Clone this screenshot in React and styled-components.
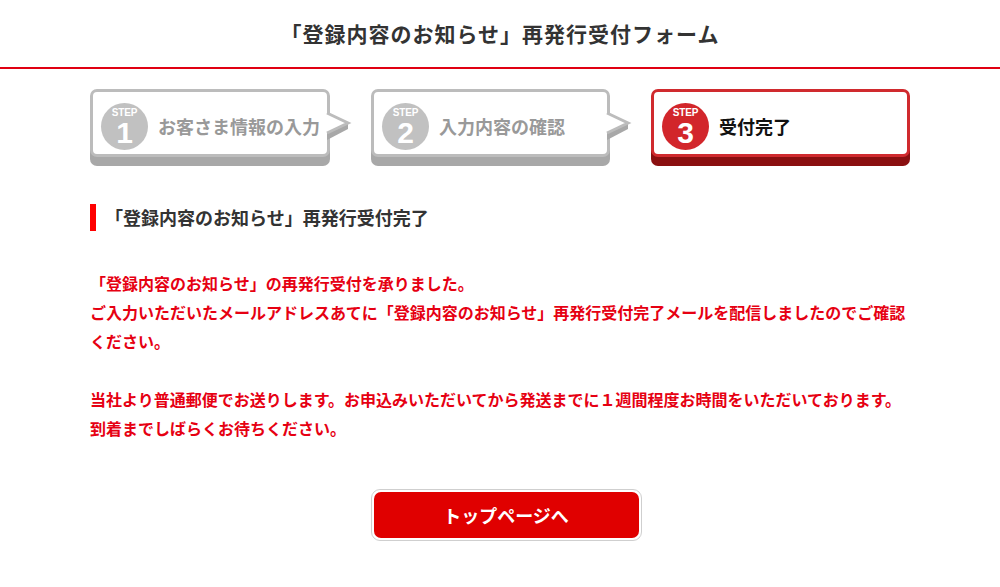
import React from 'react';
import styled, { createGlobalStyle } from 'styled-components';

const GlobalStyle = createGlobalStyle`
  body {
    margin: 0;
    background: #fff;
    font-family: "Noto Sans CJK JP", "Noto Sans", sans-serif;
  }
`;

const Header = styled.header`
  height: 67px;
  border-bottom: 2px solid #e00012;
  display: flex;
  align-items: center;
  justify-content: center;
`;

const Title = styled.h1`
  margin: 0;
  font-size: 21px;
  font-weight: 700;
  color: #333;
  letter-spacing: 1px;
  line-height: 1;
`;

const Main = styled.main`
  width: 820px;
  margin: 0 auto;
`;

const StepRow = styled.div`
  display: flex;
  justify-content: space-between;
  margin-top: 20px;
`;

const StepBox = styled.div`
  position: relative;
  box-sizing: border-box;
  width: ${p => p.$w}px;
  height: 68px;
  border: 3px solid ${p => (p.$active ? '#d02a2e' : '#bcbcbc')};
  border-radius: 7px;
  background: #fff;
  box-shadow: 0 9px 0 ${p => (p.$active ? '#8a0f10' : '#a8a8a8')};
  display: flex;
  align-items: center;
  gap: 10px;
  padding: 6px 0 0 8px;
`;

const Circle = styled.div`
  box-sizing: border-box;
  width: 47px;
  height: 47px;
  flex-shrink: 0;
  border-radius: 50%;
  background: ${p => (p.$active ? '#d2262b' : '#c1c1c1')};
  color: #fff;
  font-family: "Liberation Sans", Arial, sans-serif;
  font-weight: 700;
  display: flex;
  flex-direction: column;
  align-items: center;
  padding-top: 5px;
`;

const StepSmall = styled.span`
  font-size: 10px;
  line-height: 10px;
  letter-spacing: -0.2px;
`;

const StepNum = styled.span`
  font-size: 30px;
  line-height: 26px;
  margin-top: 2px;
`;

const StepLabel = styled.span`
  font-size: 18px;
  font-weight: 700;
  line-height: 1;
  color: ${p => (p.$active ? '#111' : '#999')};
`;

const Arrow = styled.svg`
  position: absolute;
  left: 100%;
  top: 18px;
  overflow: visible;
`;

const SectionHeading = styled.h2`
  margin: 47px 0 0;
  height: 27px;
  border-left: 6px solid #f00;
  padding-left: 9px;
  display: flex;
  align-items: center;
  font-size: 18px;
  font-weight: 700;
  line-height: 27px;
  color: #333;
`;

const Body = styled.div`
  margin-top: 38px;
`;

const Para = styled.p`
  margin: 0 0 29px;
  font-size: 16px;
  line-height: 29px;
  font-weight: 700;
  color: #e60012;
`;

const ButtonRow = styled.div`
  display: flex;
  justify-content: center;
  padding-left: 12px;
  margin-top: 46px;
`;

const ButtonFrame = styled.div`
  box-sizing: border-box;
  width: 271px;
  height: 52px;
  padding: 2px;
  border: 1px solid #cfcfcf;
  border-radius: 9px;
  background: #fff;
`;

const Button = styled.a`
  display: flex;
  align-items: center;
  justify-content: center;
  height: 100%;
  border-radius: 7px;
  background: #e00000;
  color: #fff;
  font-size: 18px;
  font-weight: 700;
  text-decoration: none;
  cursor: pointer;
`;

function StepArrow() {
  return (
    <Arrow width="24" height="32" viewBox="0 0 24 32">
      <polygon points="0,23 21,13 21,19 0,30" fill="#a8a8a8" />
      <polygon points="-1,3 21,13 -1,23" fill="#fff" />
      <polyline points="0,3 21,13 0,23" fill="none" stroke="#bcbcbc" strokeWidth="3" strokeLinejoin="miter" />
    </Arrow>
  );
}

function Step({ num, label, width, active, arrow }) {
  return (
    <StepBox $w={width} $active={active}>
      <Circle $active={active}>
        <StepSmall>STEP</StepSmall>
        <StepNum>{num}</StepNum>
      </Circle>
      <StepLabel $active={active}>{label}</StepLabel>
      {arrow && <StepArrow />}
    </StepBox>
  );
}

export default function App() {
  return (
    <>
      <GlobalStyle />
      <Header>
        <Title>「登録内容のお知らせ」再発行受付フォーム</Title>
      </Header>
      <Main>
        <StepRow>
          <Step num="1" label="お客さま情報の入力" width={240} arrow />
          <Step num="2" label="入力内容の確認" width={239} arrow />
          <Step num="3" label="受付完了" width={259} active />
        </StepRow>

        <SectionHeading>「登録内容のお知らせ」再発行受付完了</SectionHeading>

        <Body>
          <Para>
            「登録内容のお知らせ」の再発行受付を承りました。<br />
            ご入力いただいたメールアドレスあてに「登録内容のお知らせ」再発行受付完了メールを配信しましたのでご確認ください。
          </Para>
          <Para>
            当社より普通郵便でお送りします。お申込みいただいてから発送までに１週間程度お時間をいただいております。<br />
            到着までしばらくお待ちください。
          </Para>
        </Body>

        <ButtonRow>
          <ButtonFrame>
            <Button>トップページへ</Button>
          </ButtonFrame>
        </ButtonRow>
      </Main>
    </>
  );
}
